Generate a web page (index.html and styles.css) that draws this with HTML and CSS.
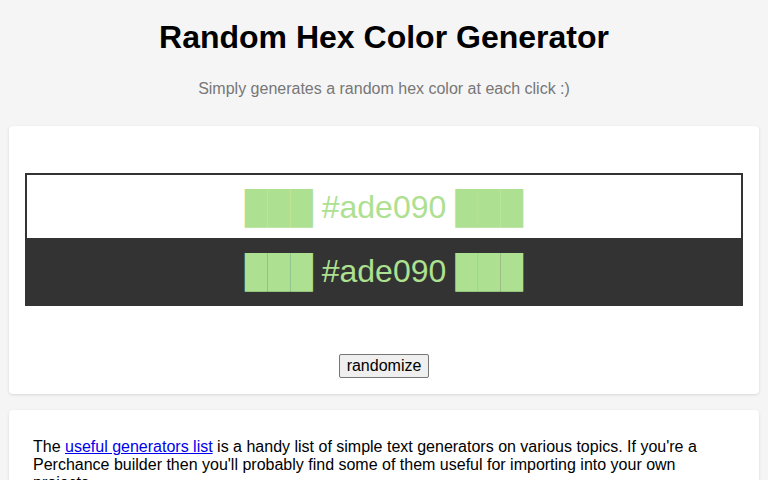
FILE: index.html
```html
<!DOCTYPE html>
<html>
<head>
  <meta charset="utf-8">
  <title>Random Hex Color Generator</title>
  <link rel="stylesheet" href="styles.css">
</head>
<body>
  <div class="page">
    <div class="header">
      <h1>Random Hex Color Generator</h1>
      <p class="subtitle">Simply generates a random hex color at each click :)</p>
    </div>
    <div class="card output-card">
      <div class="swatch-box">
        <div class="swatch swatch-light">███ #ade090 ███</div>
        <div class="swatch swatch-dark">███ #ade090 ███</div>
      </div>
      <div class="actions">
        <button class="randomize-button">randomize</button>
      </div>
    </div>
    <div class="card info-card">
      <p>The <a href="#">useful generators list</a> is a handy list of simple text generators on various topics. If you're a Perchance builder then you'll probably find some of them useful for importing into your own projects.</p>
    </div>
  </div>
</body>
</html>
```

FILE: styles.css
```css
:root {
  --bg-color: #f5f5f5;
  --card-bg: #ffffff;
  --text-color: #000000;
  --muted-color: #777777;
  --dark-color: #333333;
  --swatch-color: #ade090;
}
* {
  margin: 0;
  padding: 0;
  box-sizing: border-box;
}
body {
  font-family: "Liberation Sans", Arial, sans-serif;
  background: var(--bg-color);
  color: var(--text-color);
  overflow: hidden;
}
.page {
  padding: 0 9px;
}
.header {
  text-align: center;
  padding-top: 19px;
  height: 126px;
}
.header h1 {
  font-size: 32px;
  font-weight: bold;
  line-height: 37px;
}
.subtitle {
  margin-top: 24px;
  font-size: 16px;
  line-height: 18px;
  color: var(--muted-color);
}
.card {
  background: var(--card-bg);
  border-radius: 4px;
  box-shadow: 0 1px 3px rgba(0, 0, 0, 0.12);
}
.output-card {
  padding: 47px 16px 16px;
}
.swatch {
  font-size: 32px;
  line-height: 37px;
  text-align: center;
  color: var(--swatch-color);
  white-space: nowrap;
}
.swatch-light {
  background: #ffffff;
  border: 2px solid var(--dark-color);
  border-bottom: none;
  padding: 14px 0 12px;
}
.swatch-dark {
  background: var(--dark-color);
  padding: 15px 0 16px;
}
.actions {
  display: flex;
  justify-content: center;
  margin-top: 48px;
}
.randomize-button {
  font-family: "Liberation Sans", Arial, sans-serif;
  font-size: 16px;
  line-height: 18px;
  padding: 2px 7px;
  color: #000000;
  background: #efefef;
  border: 1px solid #767676;
  border-radius: 2px;
}
.info-card {
  margin-top: 16px;
  padding: 28px 24px 24px;
}
.info-card p {
  font-size: 16px;
  line-height: 18px;
}
.info-card a {
  color: #0000ee;
}
```
